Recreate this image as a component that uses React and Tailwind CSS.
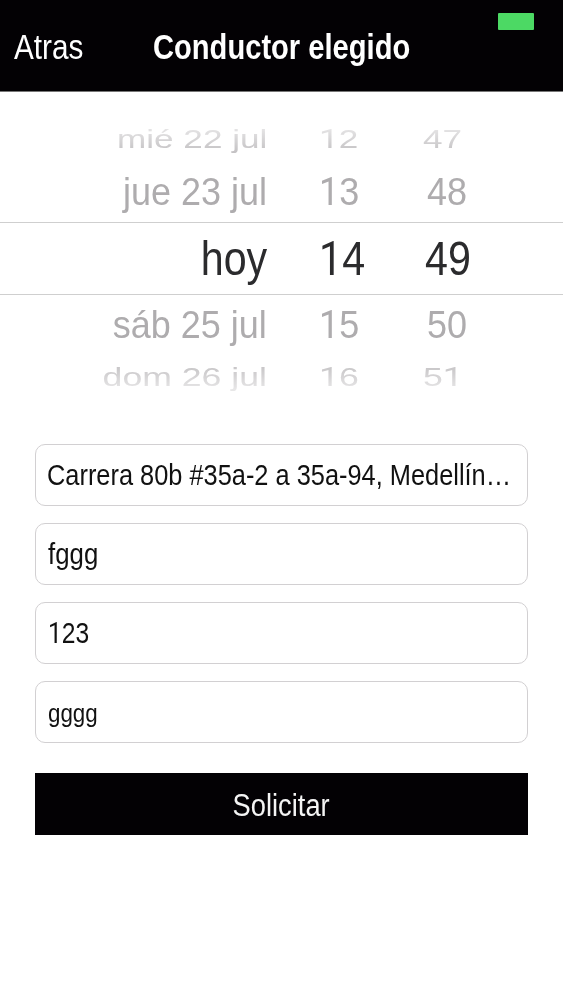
import React, { useState } from 'react';
import clsx from 'clsx';

const rows = [
  { date: 'mié 22 jul', hour: '12', minute: '47', type: 'farTop' },
  { date: 'jue 23 jul', hour: '13', minute: '48', type: 'nearTop' },
  { date: 'hoy', hour: '14', minute: '49', type: 'selected' },
  { date: 'sáb 25 jul', hour: '15', minute: '50', type: 'nearBottom' },
  { date: 'dom 26 jul', hour: '16', minute: '51', type: 'farBottom' },
];

const rowStyles = {
  farTop: 'h-[45px] text-[26px] text-[#c4c2c4] [mask-image:linear-gradient(to_bottom,rgb(0_0_0/0.4)_25%,black_80%)]',
  nearTop: 'h-[61px] pt-px text-[38.5px] text-[#aeacae]',
  selected: 'h-[73px] border-y border-[#cfcfcf] text-[48.5px] text-[#2b2b2d]',
  nearBottom: 'h-[60px] text-[38.5px] text-[#aeacae]',
  farBottom: 'h-[46px] pb-[2px] text-[26px] text-[#c4c2c4] [mask-image:linear-gradient(to_top,rgb(0_0_0/0.4)_25%,black_80%)]',
};

// the outer rows of the wheel are flattened, so their text gets wider
const textScale = {
  farTop: 'scale-x-[1.35]',
  nearTop: 'scale-x-[0.935]',
  selected: 'scale-x-[0.85]',
  nearBottom: 'scale-x-[0.935]',
  farBottom: 'scale-x-[1.37]',
};

const minuteOffset = {
  farTop: '-ml-px',
  nearTop: 'ml-[3px]',
  selected: 'ml-px',
  nearBottom: 'ml-[3px]',
  farBottom: '-ml-px',
};

// "1" without a foot
function Digits({ value }) {
  return value.split('').map((char, i) =>
    char === '1' ? <span key={i} className="font-[Roboto]">1</span> : char
  );
}

function PickerRow({ row, onClick }) {
  const scale = textScale[row.type];

  return (
    <div
      onClick={onClick}
      className={clsx('grid grid-cols-[267px_157px_1fr] items-center leading-none whitespace-nowrap', rowStyles[row.type])}
    >
      <span className={clsx('origin-right justify-self-end', scale)}>{row.date}</span>
      <span className={clsx('ml-[52px] origin-left justify-self-start', scale)}>
        <Digits value={row.hour} />
      </span>
      <span className={clsx('origin-left justify-self-start', scale, minuteOffset[row.type])}>
        <Digits value={row.minute} />
      </span>
    </div>
  );
}

function Field({ value, textClass }) {
  return (
    <div className="flex h-[62px] items-center rounded-[10px] border border-[#d2d0d2] bg-white pl-[11px]">
      <span className={clsx('origin-left leading-none whitespace-nowrap text-[#111]', textClass)}>
        {value}
      </span>
    </div>
  );
}

function App() {
  const [, setSelected] = useState('hoy');

  return (
    <div className="h-[1000px] w-[563px] overflow-hidden bg-white font-['Liberation_Sans',Arial,sans-serif]">
      <header className="relative flex h-[92px] items-center border-b border-[#777] bg-[#030104] leading-none text-white">
        <button className="mt-px ml-[14px] w-[139px] text-left text-[35px] leading-none">
          <span className="inline-block origin-left scale-x-[0.85]">Atras</span>
        </button>
        <h1 className="mt-px origin-left scale-x-[0.832] text-[35px] font-bold whitespace-nowrap">
          Conductor elegido
        </h1>
        <div className="absolute top-[13px] right-[29px] h-[17px] w-[36px] rounded-[1px] bg-[#4cd964]" />
      </header>

      <section className="pt-6">
        {rows.map((row) => (
          <PickerRow key={row.date} row={row} onClick={() => setSelected(row.date)} />
        ))}
      </section>

      <form className="flex flex-col gap-[17px] pt-[43px] pr-[35px] pl-[35px]">
        <Field
          value="Carrera 80b #35a-2 a 35a-94, Medellín…"
          textClass="text-[29px] scale-x-[0.875]"
        />
        <Field value="fggg" textClass="ml-px mt-px text-[29px] scale-x-[0.89]" />
        <Field value={<Digits value="123" />} textClass="ml-px text-[29px] scale-x-[0.85]" />
        <Field value="gggg" textClass="ml-px mt-[2px] text-[26px] scale-x-[0.86]" />
        <button
          type="button"
          className="mt-[13px] h-[62px] bg-[#030104] pt-[2px] text-[31px] leading-none text-[#f4f4f4]"
        >
          <span className="inline-block scale-x-[0.88]">Solicitar</span>
        </button>
      </form>
    </div>
  );
}

export default App;
